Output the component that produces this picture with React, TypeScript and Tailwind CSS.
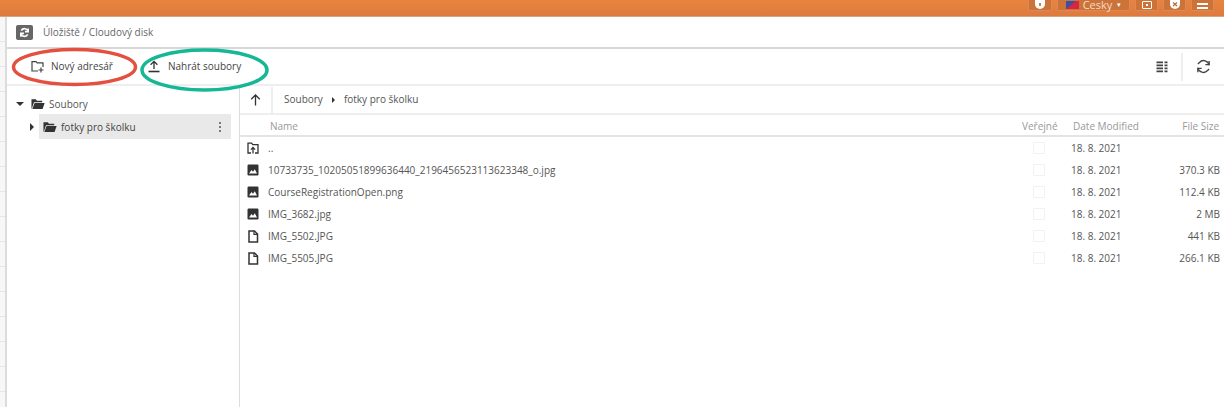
import React from "react";

const font = { fontFamily: '"Open Sans", "Noto Sans", sans-serif' };

const Img = () => (
  <svg width="12" height="12" viewBox="0 0 12 12" className="shrink-0">
    <rect x="0.5" y="0.5" width="11" height="11" rx="1.2" fill="#333" />
    <path d="M2 9.5 L4.5 6 L6 7.8 L7.8 5.2 L10 9.5 Z" fill="#fff" />
  </svg>
);
const Doc = () => (
  <svg width="12" height="13" viewBox="0 0 12 13" className="shrink-0">
    <path d="M2 1h5.5L10.5 4v8H2z" fill="none" stroke="#333" strokeWidth="1.5" />
    <path d="M7 1v3.4h3.4" fill="none" stroke="#333" strokeWidth="1.2" />
  </svg>
);
const UpFolder = () => (
  <svg width="12" height="12" viewBox="0 0 12 12" className="shrink-0">
    <path d="M4 11H1V1.2h3.6L5.8 2.6H11V11H8" fill="none" stroke="#333" strokeWidth="1.3" />
    <path d="M6 11.5V5.5M3.9 7.6 6 5.4l2.1 2.2" fill="none" stroke="#333" strokeWidth="1.3" />
  </svg>
);
const FolderOpen = () => (
  <svg width="14" height="12" viewBox="0 0 15 12" className="shrink-0">
    <path d="M0.5 11V1h4.6l1.3 1.4H12V4H3.2L0.9 10.8Z" fill="#333" />
    <path d="M3.8 4.9H14.6L12.4 11.4H1.4Z" fill="#333" />
  </svg>
);

const Top = ({ w, children }: { w: string; children?: React.ReactNode }) => (
  <div className={`${w} h-[11px] flex items-end justify-center rounded-b-[2px] border border-t-0 border-[#d98a58] bg-[#cc7339] text-white`}>
    {children}
  </div>
);

const rows = [
  { n: "..", s: "", i: <UpFolder /> },
  { n: "10733735_10205051899636440_2196456523113623348_o.jpg", s: "370.3 KB", i: <Img /> },
  { n: "CourseRegistrationOpen.png", s: "112.4 KB", i: <Img /> },
  { n: "IMG_3682.jpg", s: "2 MB", i: <Img /> },
  { n: "IMG_5502.JPG", s: "441 KB", i: <Doc /> },
  { n: "IMG_5505.JPG", s: "266.1 KB", i: <Doc /> },
];

export default function App() {
  return (
    <div style={font} className="relative w-[1224px] h-[407px] overflow-hidden bg-white text-[#555]">
      <div className="h-[17px] bg-gradient-to-b from-[#e8843f] to-[#dd7b3e] flex justify-end items-start gap-[5px] pr-[10px] border-b border-[#d8a582]">
        <Top w="w-[24px]">
          <svg width="10" height="9" viewBox="0 0 10 9" className="mb-[1px]">
            <path d="M0 0h10v4a5 5 0 0 1-10 0z" fill="#fff" />
            <rect x="4.2" y="3" width="1.6" height="3" fill="#b5682f" />
          </svg>
        </Top>
        <Top w="w-[73px]">
          <span className="flex items-center gap-[4px] text-[11px] leading-[10px] text-[#f6dcc9]">
            <svg width="13" height="8" viewBox="0 0 13 8">
              <rect width="13" height="8" fill="#d7263d" />
              <path d="M0 0h10L0 8z" fill="#3c4fa8" />
            </svg>
            Česky
            <span className="text-[7px] text-white ml-[1px]">▾</span>
          </span>
        </Top>
        <Top w="w-[23px]">
          <span className="flex items-center justify-center w-[10px] h-[8px] border border-white rounded-[1px] mb-[1px]">
            <span className="block w-[2px] h-[2px] bg-white" />
          </span>
        </Top>
        <Top w="w-[23px]">
          <svg width="10" height="9" viewBox="0 0 10 9" className="mb-[1px]">
            <path d="M0 0h10v4a5 5 0 0 1-10 0z" fill="#fff" />
            <path d="M3 2.5 7 6M7 2.5 3 6" stroke="#b5682f" strokeWidth="1.1" />
          </svg>
        </Top>
        <Top w="w-[23px]">
          <span className="flex flex-col gap-[2px] mb-[1px]">
            <span className="block w-[11px] h-[2px] bg-white" />
            <span className="block w-[11px] h-[2px] bg-white" />
          </span>
        </Top>
      </div>

      <div className="flex h-[390px]">
        <div className="w-[7px] shrink-0 border-r-2 border-[#dcdcdc] bg-[#f7f7f7] flex flex-col">
          {Array.from({ length: 16 }).map((_, i) => (
            <div key={i} className="h-[25px] shrink-0 border-b border-[#e6e6e6]" />
          ))}
        </div>

        <div className="flex-1 min-w-0 flex flex-col">
          <div className="h-[32px] shrink-0 flex items-center pl-[9px] gap-[10px] border-b-2 border-[#d8d8d8]">
            <span className="w-[17px] h-[15px] rounded-[2px] bg-[#666] flex items-center justify-center">
              <svg width="11" height="11" viewBox="0 0 24 24" fill="none" stroke="#fff" strokeWidth="3.5">
                <path d="M20 10A8 8 0 0 0 5 8M4 14a8 8 0 0 0 15 2" />
                <path d="M20 3v7h-7M4 21v-7h7" />
              </svg>
            </span>
            <span className="text-[10px] text-[#666] pt-[1px]">Úložiště / Cloudový disk</span>
          </div>

          <div className="h-[37px] shrink-0 flex items-center border-b-2 border-[#eeeeee] text-[10px] text-[#444]">
            <div className="flex items-center ml-[24px] gap-[7px]">
              <svg width="13" height="13" viewBox="0 0 13 13" fill="none" stroke="#444" strokeWidth="1.2">
                <path d="M7 11H1V1.6h4l1.2 1.3H12V7" />
                <path d="M10 7.5v5M7.5 10h5" />
              </svg>
              <span className="w-[64px] whitespace-nowrap">Nový adresář</span>
            </div>
            <div className="flex items-center ml-[33px] gap-[8px]">
              <svg width="12" height="13" viewBox="0 0 12 13" fill="none" stroke="#333" strokeWidth="1.3">
                <path d="M6 9V1.5M2.6 4.8 6 1.4l3.4 3.4" />
                <path d="M0.5 11.5h11" strokeWidth="1.6" />
              </svg>
              <span className="whitespace-nowrap">Nahrát soubory</span>
            </div>
            <div className="ml-auto flex items-center h-[28px]">
              <svg width="12" height="12" viewBox="0 0 12 12" className="mr-[13px]" fill="#444">
                <path d="M0.5 0.5h6.5v1.8H0.5zM0.5 3.5h6.5v1.8H0.5zM0.5 6.5h6.5v1.8H0.5zM0.5 9.5h6.5v1.8H0.5z" />
                <path d="M8.5 0.5h3v1.8h-3zM8.5 3.5h3v1.8h-3zM8.5 6.5h3v1.8h-3zM8.5 9.5h3v1.8h-3z" />
              </svg>
              <div className="h-[28px] border-l-2 border-[#eeeeee] pl-[13px] pr-[13px] flex items-center">
                <svg width="15" height="15" viewBox="0 0 24 24" fill="none" stroke="#444" strokeWidth="2.2">
                  <path d="M21 10A9 9 0 0 0 5.5 5.5L3 8M3 14a9 9 0 0 0 15.5 4.5L21 16" />
                  <path d="M21 3v6h-6M3 21v-6h6" />
                </svg>
              </div>
            </div>
          </div>

          <div className="flex-1 flex min-h-0">
            <div className="w-[233px] shrink-0 border-r border-[#dddddd] text-[10px] text-[#555]">
              <div className="flex items-center h-[24px] mt-[6px] pl-[9px]">
                <span className="w-0 h-0 border-x-[4px] border-x-transparent border-t-[4px] border-t-[#333] mr-[7px]" />
                <FolderOpen />
                <span className="ml-[4px]">Soubory</span>
              </div>
              <div className="flex items-center -mt-[2px] pl-[23px]">
                <span className="w-0 h-0 border-y-[4px] border-y-transparent border-l-[4px] border-l-[#333] mr-[5px]" />
                <div className="h-[25px] flex items-center flex-1 mr-[8px] bg-[#e9e9e9] pl-[4px] pr-[10px]">
                  <FolderOpen />
                  <span className="ml-[4px] pt-[2px] text-[#444]">fotky pro školku</span>
                  <span className="ml-auto flex flex-col gap-[2px]">
                    <span className="block w-[2px] h-[2px] rounded-full bg-[#555]" />
                    <span className="block w-[2px] h-[2px] rounded-full bg-[#555]" />
                    <span className="block w-[2px] h-[2px] rounded-full bg-[#555]" />
                  </span>
                </div>
              </div>
            </div>

            <div className="flex-1 min-w-0 flex flex-col">
              <div className="h-[29px] shrink-0 flex items-center border-b-2 border-[#eeeeee] text-[10px] text-[#555]">
                <div className="w-[33px] h-[26px] border-r-2 border-[#eeeeee] flex items-center justify-center">
                  <svg width="11" height="12" viewBox="0 0 11 12" fill="none" stroke="#333" strokeWidth="1.3">
                    <path d="M5.5 11.5V1M1.2 5.2 5.5 1l4.3 4.2" />
                  </svg>
                </div>
                <span className="ml-[11px]">Soubory</span>
                <span className="mx-[9px] w-0 h-0 border-y-[3px] border-y-transparent border-l-[3px] border-l-[#333]" />
                <span>fotky pro školku</span>
              </div>

              <div className="h-[22px] shrink-0 flex items-center border-b-2 border-[#e4e4e4] pt-[2px] text-[10px] text-[#999] pr-[5px] whitespace-nowrap">
                <span className="ml-[30px]">Name</span>
                <span className="ml-auto w-[51px]">Veřejné</span>
                <span className="w-[109px]">Date Modified</span>
                <span className="w-[37px] text-right">File Size</span>
              </div>

              <div className="flex flex-col">
                {rows.map((r) => (
                  <div key={r.n} className="h-[22px] shrink-0 flex items-center text-[10px] text-[#555] pr-[4px]">
                    <span className="w-[12px] ml-[7px] flex justify-center">{r.i}</span>
                    <span className="ml-[9px] whitespace-nowrap">{r.n}</span>
                    <span className="ml-auto w-[12px] h-[12px] border border-[#f2f2f2] rounded-[1px]" />
                    <span className="w-[60px] ml-[26px] text-[#555]">18. 8. 2021</span>
                    <span className="w-[89px] text-right">{r.s}</span>
                  </div>
                ))}
              </div>
            </div>
          </div>
        </div>
      </div>

      <svg className="absolute left-[10px] top-[46px] pointer-events-none" width="262" height="48" viewBox="0 0 262 48" fill="none">
        <ellipse cx="64.5" cy="21" rx="61" ry="17.5" stroke="#e4503f" strokeWidth="3.5" />
        <ellipse cx="194.5" cy="24" rx="62.5" ry="20" stroke="#16b795" strokeWidth="3.5" />
      </svg>
    </div>
  );
}
